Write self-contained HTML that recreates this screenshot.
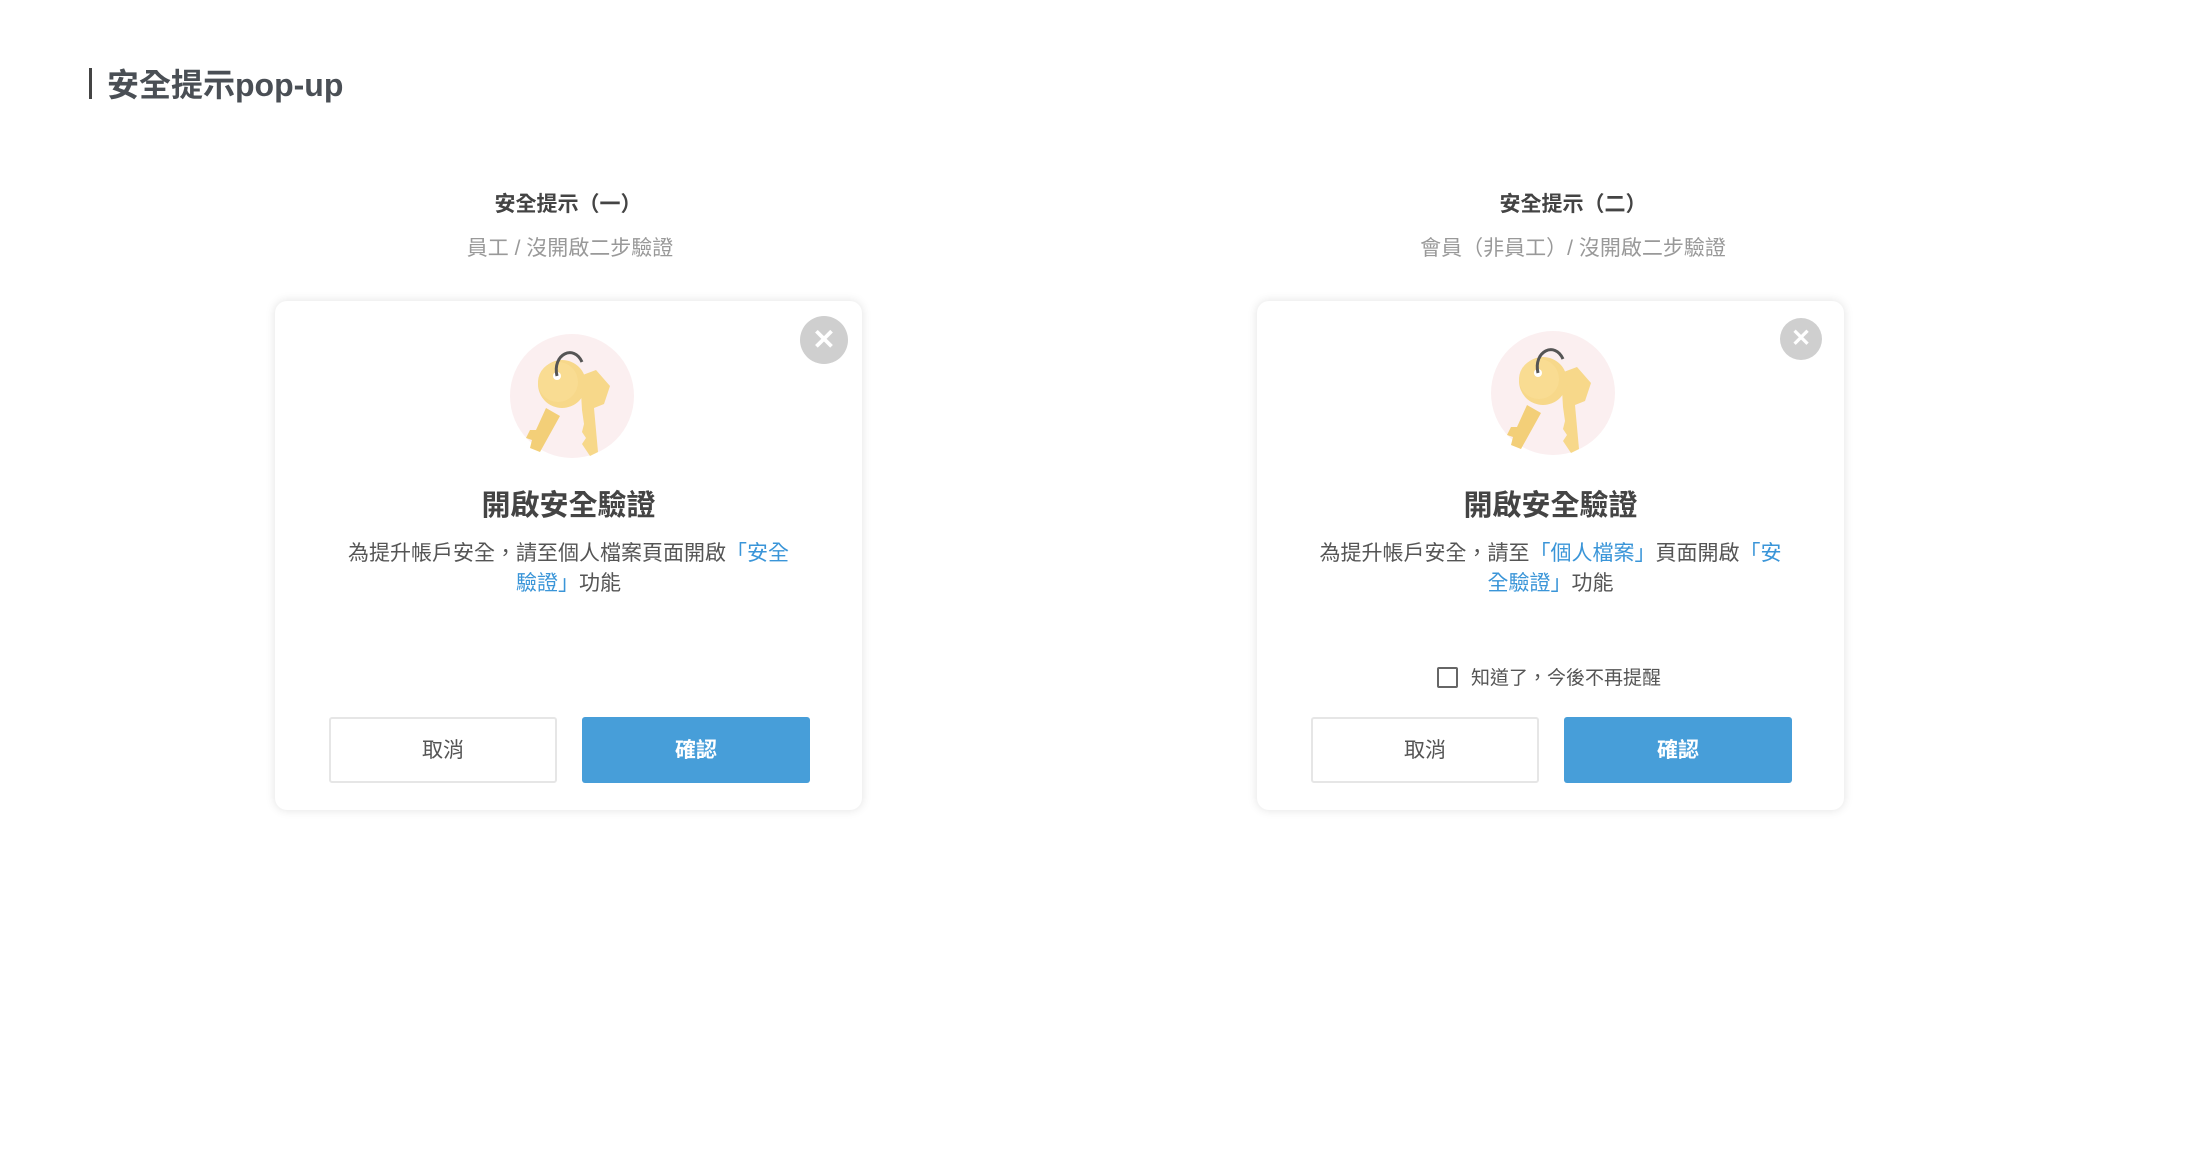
<!DOCTYPE html>
<html><head><meta charset="utf-8"><style>
*{margin:0;padding:0;box-sizing:border-box}
body{width:2210px;height:1172px;background:#fff;font-family:"Liberation Sans","Noto Sans CJK TC",sans-serif;position:relative;overflow:hidden;color:#444}
.abs{position:absolute}
.h{font-size:21px;font-weight:bold;color:#444;text-align:center;width:600px}
.s{font-size:21px;color:#999;text-align:center;width:600px}
.card{position:absolute;top:301px;width:587px;height:509px;background:#fff;border-radius:12px;box-shadow:0 0 10px rgba(0,0,0,0.12)}
.close{position:absolute;width:48px;height:48px;border-radius:50%;background:#cfcfcf;color:#fff;font-size:28px;font-weight:bold;text-align:center;line-height:48px}
.t{position:absolute;left:0;width:100%;top:181px;text-align:center;font-size:29px;font-weight:bold;color:#444}
.d{position:absolute;left:0;width:100%;top:238px;text-align:center;font-size:21px;line-height:30px;color:#555}
.b{color:#3a95d8}
.btn{position:absolute;top:416px;width:228px;height:66px;border-radius:3px;font-size:21px;text-align:center;line-height:64px}
.c{border:2px solid #e6e6e6;color:#555;background:#fff}
.o{background:#479ed9;color:#fff;font-weight:bold;line-height:68px}
.keys{position:absolute;width:124px;height:124px}
</style></head><body>
<div class="abs" style="left:89px;top:68px;width:3px;height:31px;background:#444"></div>
<div class="abs" style="left:107px;top:60px;font-size:32px;font-weight:bold;color:#4a4f55">安全提示pop-up</div>

<div class="abs h" style="left:268px;top:188px">安全提示（一）</div>
<div class="abs s" style="left:270px;top:232px">員工 / 沒開啟二步驗證</div>
<div class="abs h" style="left:1273px;top:188px">安全提示（二）</div>
<div class="abs s" style="left:1273px;top:232px">會員（非員工）/ 沒開啟二步驗證</div>

<svg width="0" height="0" style="position:absolute"><defs>
<g id="k">
<circle cx="62" cy="62" r="62" fill="#fbeff0"/>
<path d="M70 42 L86 36 L100 52 L94 70 L84 74 L88 118 L80 122 L76 116 L72 110 L76 104 L72 98 L74 90 L72 76 Z" fill="#f7d88a"/>
<path d="M36 74 L50 82 L30 118 L20 114 L22 106 L16 104 L20 96 L26 96 Z" fill="#f3cf78"/>
<circle cx="52" cy="50" r="24" fill="#f7d88a"/>
<circle cx="48" cy="48" r="20" fill="#f9dc92"/>
<circle cx="47" cy="42" r="4" fill="#fff"/>
<path d="M47 42 C42 20 64 10 72 28" fill="none" stroke="#555" stroke-width="3"/>
</g></defs></svg>

<div class="card" style="left:275px">
  <div class="close" style="left:525px;top:15px">✕</div>
  <svg class="keys" style="left:235px;top:33px" viewBox="0 0 124 124"><use href="#k"/></svg>
  <div class="t">開啟安全驗證</div>
  <div class="d">為提升帳戶安全，請至個人檔案頁面開啟<span class="b">「安全<br>驗證」</span>功能</div>
  <div class="btn c" style="left:54px">取消</div>
  <div class="btn o" style="left:307px">確認</div>
</div>

<div class="card" style="left:1257px">
  <div class="close" style="left:523px;top:17px;width:42px;height:42px;line-height:42px;font-size:24px">✕</div>
  <svg class="keys" style="left:234px;top:30px" viewBox="0 0 124 124"><use href="#k"/></svg>
  <div class="t">開啟安全驗證</div>
  <div class="d">為提升帳戶安全，請至<span class="b">「個人檔案」</span>頁面開啟<span class="b">「安<br>全驗證」</span>功能</div>
  <div class="abs" style="left:180px;top:366px;width:21px;height:21px;border:2px solid #666;border-radius:2px"></div>
  <div class="abs" style="left:214px;top:362px;font-size:19px;color:#555">知道了，今後不再提醒</div>
  <div class="btn c" style="left:54px">取消</div>
  <div class="btn o" style="left:307px">確認</div>
</div>
</body></html>
